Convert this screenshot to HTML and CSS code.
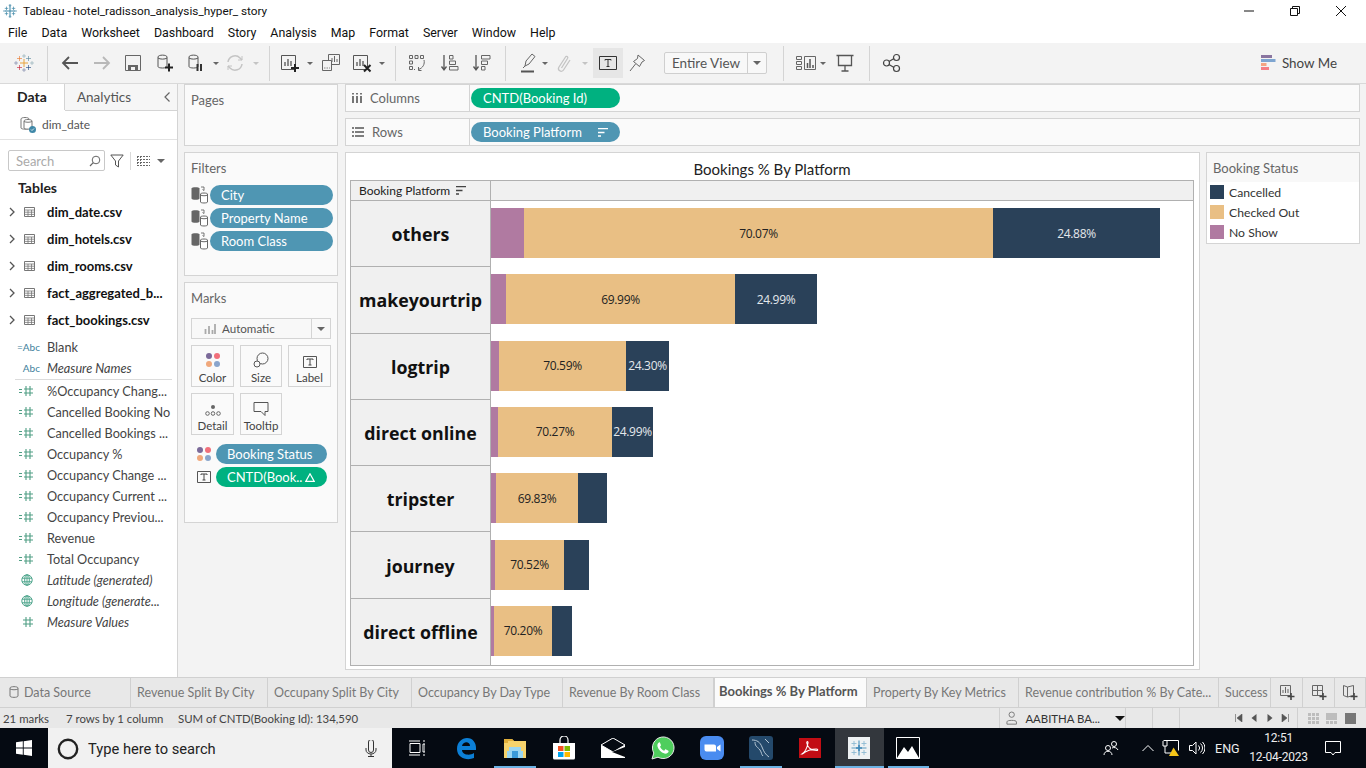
FILE: index.html
```html
<!DOCTYPE html>
<html lang="en">

<head>
    <meta charset="UTF-8">
    <title>Tableau - hotel_radisson_analysis_hyper_ story</title>
    <link rel="stylesheet" href="styles.css">
</head>

<body>
    <svg class="defs" width="0" height="0">
        <symbol id="cross" viewBox="0 0 8 8"><path d="M4 0v8M0 4h8" fill="none" stroke="currentColor"/></symbol>
        <symbol id="tbl" viewBox="0 0 11 10"><path d="M.5.5h10v9H.5z" fill="none" stroke="#777"/><path d="M.5 3h10M.5 5.2h10M.5 7.4h10M4 3v6.500M7.500 3v6.500" stroke="#777" fill="none" stroke-width=".8"/></symbol>
        <symbol id="meas" viewBox="0 0 16 10"><path d="M0 3.500h3M0 6.500h3" stroke="#4f9e84" fill="none"/><path d="M7 0v10M11 0v10M5 3h9M5 7h9" stroke="#4f9e84" fill="none" stroke-width="1.100"/></symbol>
        <symbol id="globe" viewBox="0 0 12 12"><g fill="none" stroke="#4ea58c"><circle cx="6" cy="6" r="5.200"/><ellipse cx="6" cy="6" rx="2.300" ry="5.200"/><path d="M1 4.200h10M1 7.800h10M6 .8v10.400"/></g></symbol>
        <symbol id="dbpair" viewBox="0 0 18 18"><path d="M.5 2.500C.5.800 8.500.800 8.500 2.500v10c0 1.700-8 1.700-8 0z" fill="#666"/><path d="M10 1h3v3.500L11.500 3.500" fill="none" stroke="#555" stroke-width=".8"/><path d="M9.500 8c0-1.300 7-1.300 7 0v8c0 1.300-7 1.300-7 0z" fill="#fff" stroke="#666"/><path d="M9.500 9c1.500 1 5.500 1 7 0" fill="none" stroke="#666"/></symbol>
        <symbol id="sortbars" viewBox="0 0 10 9"><path d="M0 .5h10M0 4.500h6.500M0 8h3" fill="none" stroke="currentColor" stroke-width="1.600"/></symbol>
        <symbol id="chartbox" viewBox="0 0 20 20"><path d="M1.500 2.500h14v14h-14z" fill="none" stroke="#555"/><path d="M5 13V9M8 13V6M11 13v-5" fill="none" stroke="#555" stroke-width="1.300"/></symbol>
    </svg>

    <div class="titlebar">
        <svg class="title-logo" viewBox="0 0 16 16">
            <g color="#3f88a8" fill="none" stroke="currentColor">
                <path d="M8 2v12M2 8h12" stroke-width="1.200"/>
                <path d="M4 3v4M2 5h4M12 3v4M10 5h4M4 9v4M2 11h4M12 9v4M10 11h4M8 0v3M6.500 1.500h3M8 13v3M6.500 14.500h3M0 8h3M13 8h3" stroke-width=".8"/>
            </g>
        </svg>
        <span class="title-text">Tableau - hotel_radisson_analysis_hyper_ story</span>
        <div class="winbtns">
            <svg viewBox="0 0 12 12"><path d="M1 6h10" stroke="#111" fill="none"/></svg>
            <svg viewBox="0 0 12 12"><path d="M1.500 3.500h7v7h-7zM3.500 3.500v-2h7v7h-2" stroke="#111" fill="none"/></svg>
            <svg viewBox="0 0 12 12"><path d="M1 1l10 10M11 1L1 11" stroke="#111" fill="none"/></svg>
        </div>
    </div>

    <nav class="menubar">
        <span>File</span><span>Data</span><span>Worksheet</span><span>Dashboard</span><span>Story</span><span>Analysis</span><span>Map</span><span>Format</span><span>Server</span><span>Window</span><span>Help</span>
    </nav>

    <div class="toolbar">
        <svg class="ico" viewBox="0 0 20 20">
            <use href="#cross" x="8" y="1" width="4" height="4" color="#7099a6"/>
            <use href="#cross" x="3" y="3" width="5" height="5" color="#e8762b"/>
            <use href="#cross" x="12" y="3" width="5" height="5" color="#59879b"/>
            <use href="#cross" x="6" y="6" width="8" height="8" color="#e8a33d"/>
            <use href="#cross" x="0" y="8" width="4" height="4" color="#5b6591"/>
            <use href="#cross" x="16" y="8" width="4" height="4" color="#7099a6"/>
            <use href="#cross" x="3" y="12" width="5" height="5" color="#c72035"/>
            <use href="#cross" x="12" y="12" width="5" height="5" color="#1f457e"/>
            <use href="#cross" x="8" y="15" width="4" height="4" color="#5b6591"/>
        </svg>
        <i class="sep"></i>
        <svg class="ico" viewBox="0 0 20 20"><path d="M18 10H3M9 4l-6 6 6 6" fill="none" stroke="#555" stroke-width="1.800"/></svg>
        <svg class="ico" viewBox="0 0 20 20"><path d="M2 10h15M11 4l6 6-6 6" fill="none" stroke="#b8b8b8" stroke-width="1.800"/></svg>
        <svg class="ico" viewBox="0 0 20 20"><path d="M2.500 2.500h15v15h-15z" fill="none" stroke="#666"/><path d="M5 17v-5h10v5zM8 14h4v3H8z" fill="#666"/><path d="M8 14h4v3H8z" fill="#f3f3f3"/></svg>
        <svg class="ico" viewBox="0 0 20 20"><path d="M3 4c0-2.500 9-2.500 9 0v9.500c0 2-9 2-9 0z" fill="none" stroke="#555"/><path d="M3 5c2 1.500 7 1.500 9 0" fill="none" stroke="#555"/><path d="M14 10.500v8M10 14.500h8" stroke="#222" stroke-width="2" fill="none"/></svg>
        <svg class="ico" viewBox="0 0 20 20"><path d="M3 4c0-2.500 9-2.500 9 0v9.500c0 2-9 2-9 0z" fill="none" stroke="#555"/><path d="M3 5c2 1.500 7 1.500 9 0" fill="none" stroke="#555"/><path d="M11.500 11v7M15 11v7" stroke="#333" stroke-width="2" fill="none"/></svg>
        <i class="caret"></i>
        <svg class="ico" viewBox="0 0 20 20"><path d="M3 9a7 7 0 0 1 12-4l2 2M17 11a7 7 0 0 1-12 4l-2-2" fill="none" stroke="#c4c4c4" stroke-width="1.500"/><path d="M17 3v4h-4M3 17v-4h4" fill="none" stroke="#c4c4c4"/></svg>
        <i class="caret off"></i>
        <i class="sep"></i>
        <svg class="ico" viewBox="0 0 20 20"><use href="#chartbox" width="20" height="20"/><path d="M15 11v8M11 15h8" stroke="#222" stroke-width="2" fill="none"/></svg>
        <i class="caret"></i>
        <svg class="ico" viewBox="0 0 20 20"><path d="M7.500 1.500h11v10h-11z" fill="#f3f3f3" stroke="#666"/><path d="M1.500 7.500h9v10h-9z" fill="#f3f3f3" stroke="#666"/><path d="M11 9V5M13.500 9V3M16 9V6" stroke="#666" fill="none"/><path d="M3 15h6" stroke="#888" stroke-dasharray="1.500 1"/></svg>
        <svg class="ico" viewBox="0 0 20 20"><use href="#chartbox" width="20" height="20"/><path d="M12 12l6.500 6.500M18.500 12L12 18.500" stroke="#222" stroke-width="2" fill="none"/></svg>
        <i class="caret"></i>
        <i class="sep"></i>
        <svg class="ico" viewBox="0 0 20 20"><path d="M2.500 2.500h3v3h-3zM8 2.500h3v3H8zM13.500 2.500h3v3h-3zM2.500 8h3v3h-3zM2.500 13.500h3v3h-3z" fill="none" stroke="#666"/><path d="M17 7c1 4-1 8-5.500 9.500M11.500 14v3.500h3M8 16l-1 1" fill="none" stroke="#666"/></svg>
        <svg class="ico" viewBox="0 0 20 20"><path d="M4 2v14M1.500 13.500L4 17l2.500-3.500" fill="none" stroke="#555" stroke-width="1.300"/><path d="M9.500 2.500h3.500v3.500H9.500zM9.500 8h6v3.500h-6zM9.500 13.500H18V17H9.500z" fill="none" stroke="#666"/></svg>
        <svg class="ico" viewBox="0 0 20 20"><path d="M4 2v14M1.500 13.500L4 17l2.500-3.500" fill="none" stroke="#555" stroke-width="1.300"/><path d="M9.500 2.500H18V6H9.500zM9.500 8h6v3.500h-6zM9.500 13.500h3.500V17H9.500z" fill="none" stroke="#666"/></svg>
        <i class="sep"></i>
        <svg class="ico" viewBox="0 0 20 20"><path d="M7 13l1-5 6-7 3 2.500-6 7.500zM5 15l2-2" fill="none" stroke="#666"/><path d="M3 18.500h13" stroke="#555" stroke-width="2" fill="none"/></svg>
        <i class="caret"></i>
        <svg class="ico" viewBox="0 0 20 20"><path d="M7.500 15L13.500 5.500c1-1.700-1-3-2-1.500L5 14c-2 3 2.500 6 4.500 3L16 7" fill="none" stroke="#c4c4c4" stroke-width="1.300"/></svg>
        <i class="caret off"></i>
        <div class="tool-on"><svg class="ico" viewBox="0 0 20 20"><path d="M1.500 3.500h17v13h-17z" fill="none" stroke="#333"/><path d="M7 7.500V6.500h6v1M10 6.500v7M8.500 13.500h3" fill="none" stroke="#333"/></svg></div>
        <svg class="ico" viewBox="0 0 20 20"><path d="M11 2l6.500 5.500L15 9l-2.500 4.500-6-5 4-3zM8.500 11L3 18" fill="none" stroke="#666"/></svg>
        <div class="fit-box"><span>Entire View</span><b><i class="caret dark"></i></b></div>
        <i class="sep"></i>
        <svg class="ico wide" viewBox="0 0 22 20"><path d="M1.500 3.500h5v3h-5zM1.500 8.500h5v3h-5zM1.500 13.500h5v3h-5z" fill="none" stroke="#666"/><path d="M9.500 3.500h11v13h-11z" fill="none" stroke="#666"/><path d="M12.500 15v-5M15 15V6M18 15v-3" stroke="#555" stroke-width="1.500" fill="none"/></svg>
        <i class="caret"></i>
        <svg class="ico" viewBox="0 0 20 20"><path d="M1.500 2.500h17M3.500 2.500v10h13v-10M10 12.500v5M6.500 18h7" fill="none" stroke="#555" stroke-width="1.300"/></svg>
        <i class="sep"></i>
        <svg class="ico" viewBox="0 0 20 20"><g fill="none" stroke="#444" stroke-width="1.200"><circle cx="4.500" cy="10" r="3"/><circle cx="14.500" cy="4.500" r="3"/><circle cx="14.500" cy="15.500" r="3"/><path d="M7 8.500l5-3M7 11.500l5 3"/></g></svg>
        <div class="showme">
            <svg viewBox="0 0 15 16" width="15" height="16"><path d="M0 0h11v3H0z" fill="#8a75a0"/><path d="M0 4h14.500v3H0z" fill="#7ea5d0"/><path d="M0 8h5.500v3H0z" fill="#f4a582"/><path d="M0 12h8v3H0z" fill="#f57f85"/></svg>
            <span>Show Me</span>
        </div>
    </div>

    <main class="workspace">
        <aside class="datapane">
            <div class="pane-tabs">
                <span class="pane-tab active">Data</span>
                <span class="pane-tab">Analytics</span>
                <svg class="collapse" viewBox="0 0 8 12" width="8" height="12"><path d="M6.500 1.500L2 6l4.500 4.500" fill="none" stroke="#666" stroke-width="1.200"/></svg>
            </div>
            <div class="source">
                <svg viewBox="0 0 18 18" width="18" height="18"><path d="M2 3c0-2 8-2 8 0v9c0 1.500-8 1.500-8 0z" fill="#fff" stroke="#777"/><path d="M5 5c0-2 8-2 8 0v7c0 1.500-8 1.500-8 0z" fill="#fff" stroke="#777"/><path d="M5 5.500c2 1 6 1 8 0" fill="none" stroke="#777"/><circle cx="13.500" cy="13.500" r="3.500" fill="#3f88a8"/><path d="M12 13.500l1 1 2-2" stroke="#fff" fill="none" stroke-width=".8"/></svg>
                <span>dim_date</span>
            </div>
            <div class="search-row">
                <div class="search">
                    <span>Search</span>
                    <svg viewBox="0 0 12 12" width="12" height="12"><circle cx="7" cy="5" r="3.800" fill="none" stroke="#666"/><path d="M4.300 7.700L1 11" stroke="#666" fill="none" stroke-width="1.200"/></svg>
                </div>
                <svg class="filter-ico" viewBox="0 0 14 14" width="14" height="14"><path d="M.8 1h12.400L8.500 7v6l-3-2V7z" fill="none" stroke="#555"/></svg>
                <i class="vline"></i>
                <svg viewBox="0 0 13 10" width="13" height="10"><path d="M0 .5h13M0 3.500h13M0 6.500h13M0 9.500h13M.5 0v10M3.500 0v10" stroke="#666" stroke-dasharray="2 1" fill="none"/></svg>
                <i class="caret dark"></i>
            </div>
            <h3 class="tables-head">Tables</h3>
            <ul class="table-list">
                <li><svg viewBox="0 0 6 10" width="6" height="10"><path d="M1 1l4 4-4 4" fill="none" stroke="#555" stroke-width="1.300"/></svg><svg width="11" height="10"><use href="#tbl"/></svg><span>dim_date.csv</span></li>
                <li><svg viewBox="0 0 6 10" width="6" height="10"><path d="M1 1l4 4-4 4" fill="none" stroke="#555" stroke-width="1.300"/></svg><svg width="11" height="10"><use href="#tbl"/></svg><span>dim_hotels.csv</span></li>
                <li><svg viewBox="0 0 6 10" width="6" height="10"><path d="M1 1l4 4-4 4" fill="none" stroke="#555" stroke-width="1.300"/></svg><svg width="11" height="10"><use href="#tbl"/></svg><span>dim_rooms.csv</span></li>
                <li><svg viewBox="0 0 6 10" width="6" height="10"><path d="M1 1l4 4-4 4" fill="none" stroke="#555" stroke-width="1.300"/></svg><svg width="11" height="10"><use href="#tbl"/></svg><span>fact_aggregated_b...</span></li>
                <li><svg viewBox="0 0 6 10" width="6" height="10"><path d="M1 1l4 4-4 4" fill="none" stroke="#555" stroke-width="1.300"/></svg><svg width="11" height="10"><use href="#tbl"/></svg><span>fact_bookings.csv</span></li>
            </ul>
            <ul class="field-list dims">
                <li><em class="abc">=Abc</em><span>Blank</span></li>
                <li><em class="abc">Abc</em><span class="it">Measure Names</span></li>
            </ul>
            <ul class="field-list">
                <li><svg width="16" height="10"><use href="#meas"/></svg><span>%Occupancy Chang...</span></li>
                <li><svg width="16" height="10"><use href="#meas"/></svg><span>Cancelled Booking No</span></li>
                <li><svg width="16" height="10"><use href="#meas"/></svg><span>Cancelled Bookings ...</span></li>
                <li><svg width="16" height="10"><use href="#meas"/></svg><span>Occupancy %</span></li>
                <li><svg width="16" height="10"><use href="#meas"/></svg><span>Occupancy Change ...</span></li>
                <li><svg width="16" height="10"><use href="#meas"/></svg><span>Occupancy Current ...</span></li>
                <li><svg width="16" height="10"><use href="#meas"/></svg><span>Occupancy Previou...</span></li>
                <li><svg width="16" height="10"><use href="#meas"/></svg><span>Revenue</span></li>
                <li><svg width="16" height="10"><use href="#meas"/></svg><span>Total Occupancy</span></li>
                <li><svg width="16" height="12"><use href="#globe" x="2" width="12" height="12"/></svg><span class="it">Latitude (generated)</span></li>
                <li><svg width="16" height="12"><use href="#globe" x="2" width="12" height="12"/></svg><span class="it">Longitude (generate...</span></li>
                <li><svg width="16" height="10"><path d="M7 0v10M11 0v10M4 3h10M4 7h10" stroke="#4f9e84" fill="none" stroke-width="1.100"/></svg><span class="it">Measure Values</span></li>
            </ul>
        </aside>

        <div class="sidecards">
            <section class="card pages"><h4>Pages</h4></section>
            <section class="card filters">
                <h4>Filters</h4>
                <div class="filter-pill"><svg width="18" height="18"><use href="#dbpair"/></svg><span class="pill blue">City</span></div>
                <div class="filter-pill"><svg width="18" height="18"><use href="#dbpair"/></svg><span class="pill blue">Property Name</span></div>
                <div class="filter-pill"><svg width="18" height="18"><use href="#dbpair"/></svg><span class="pill blue">Room Class</span></div>
            </section>
            <section class="card marks">
                <h4>Marks</h4>
                <div class="mark-type">
                    <svg viewBox="0 0 12 10" width="12" height="10"><path d="M1.500 10V5M5 10V2M8.500 10V6M11 10V0" stroke="#aaa" stroke-width="1.800" fill="none"/></svg>
                    <span>Automatic</span><b><i class="caret dark"></i></b>
                </div>
                <div class="mark-btns">
                    <div class="mark-btn">
                        <svg viewBox="0 0 16 16" width="16" height="16"><circle cx="4" cy="4" r="3" fill="#7b6a99"/><circle cx="12" cy="4" r="3" fill="#f1707b"/><circle cx="4" cy="12" r="3" fill="#f0a87c"/><circle cx="12" cy="12" r="3" fill="#8aa5cc"/></svg>
                        <span>Color</span>
                    </div>
                    <div class="mark-btn">
                        <svg viewBox="0 0 16 16" width="16" height="16"><circle cx="9.500" cy="6.500" r="5.500" fill="none" stroke="#555"/><circle cx="4" cy="12" r="3" fill="#fafafa" stroke="#555"/></svg>
                        <span>Size</span>
                    </div>
                    <div class="mark-btn">
                        <svg viewBox="0 0 14 12" width="14" height="12"><path d="M.5.5h13v11H.5z" fill="none" stroke="#555"/><path d="M4 4V3h6v1M7 3v6M5.500 9h3" fill="none" stroke="#444"/></svg>
                        <span>Label</span>
                    </div>
                    <div class="mark-btn">
                        <svg viewBox="0 0 16 12" width="16" height="12"><circle cx="8" cy="3" r="2" fill="#666"/><g fill="none" stroke="#666"><circle cx="2.500" cy="9.500" r="1.800"/><circle cx="8" cy="9.500" r="1.800"/><circle cx="13.500" cy="9.500" r="1.800"/></g></svg>
                        <span>Detail</span>
                    </div>
                    <div class="mark-btn">
                        <svg viewBox="0 0 16 14" width="16" height="14"><path d="M1 .5h14v9h-3v4l-4-4H1z" fill="none" stroke="#555"/></svg>
                        <span>Tooltip</span>
                    </div>
                </div>
                <div class="mark-pill">
                    <svg viewBox="0 0 16 16" width="16" height="16"><circle cx="4" cy="4" r="3" fill="#7b6a99"/><circle cx="12" cy="4" r="3" fill="#f1707b"/><circle cx="4" cy="12" r="3" fill="#f0a87c"/><circle cx="12" cy="12" r="3" fill="#8aa5cc"/></svg>
                    <span class="pill blue">Booking Status</span>
                </div>
                <div class="mark-pill">
                    <svg viewBox="0 0 14 12" width="14" height="12"><path d="M.5.5h13v11H.5z" fill="none" stroke="#555"/><path d="M4 4V3h6v1M7 3v6M5.500 9h3" fill="none" stroke="#444"/></svg>
                    <span class="pill green spread">CNTD(Book.. <svg viewBox="0 0 10 9" width="10" height="9"><path d="M5 .8L9.200 8.400H.8z" fill="none" stroke="#fff" stroke-width="1.200"/></svg></span>
                </div>
            </section>
        </div>

        <div class="canvas">
            <div class="shelf">
                <div class="shelf-label">
                    <svg viewBox="0 0 10 10" width="10" height="10"><path d="M1 3v7M5 3v7M9 3v7" stroke="#555" stroke-width="1.600" fill="none"/><path d="M1 0v1.500M5 0v1.500M9 0v1.500" stroke="#555" stroke-width="1.600" fill="none"/></svg>
                    <span>Columns</span>
                </div>
                <span class="pill green shelf-pill">CNTD(Booking Id)</span>
            </div>
            <div class="shelf">
                <div class="shelf-label">
                    <svg viewBox="0 0 12 10" width="12" height="10"><path d="M0 1h2M3 1h9M0 5h2M3 5h9M0 9h2M3 9h9" stroke="#555" stroke-width="1.400" fill="none"/></svg>
                    <span>Rows</span>
                </div>
                <span class="pill blue shelf-pill spread">Booking Platform <svg viewBox="0 0 10 9" width="10" height="9" color="#fff"><use href="#sortbars"/></svg></span>
            </div>

            <div class="viz-row">
                <section class="viz">
                    <h2 class="viz-title">Bookings % By Platform</h2>
                    <div class="crosstab">
                        <div class="ct-head">
                            <div class="ct-head-label">Booking Platform <svg viewBox="0 0 10 9" width="10" height="9" color="#444"><use href="#sortbars"/></svg></div>
                            <div class="ct-head-rest"></div>
                        </div>
                        <div class="ct-row">
                            <div class="ct-name">others</div>
                            <div class="ct-plot">
                                <div class="seg noshow" style="width:33px"></div>
                                <div class="seg checked" style="width:469px">70.07%</div>
                                <div class="seg cancelled" style="width:167px">24.88%</div>
                            </div>
                        </div>
                        <div class="ct-row">
                            <div class="ct-name">makeyourtrip</div>
                            <div class="ct-plot">
                                <div class="seg noshow" style="width:15px"></div>
                                <div class="seg checked" style="width:229px">69.99%</div>
                                <div class="seg cancelled" style="width:82px">24.99%</div>
                            </div>
                        </div>
                        <div class="ct-row">
                            <div class="ct-name">logtrip</div>
                            <div class="ct-plot">
                                <div class="seg noshow" style="width:8px"></div>
                                <div class="seg checked" style="width:127px">70.59%</div>
                                <div class="seg cancelled" style="width:43px">24.30%</div>
                            </div>
                        </div>
                        <div class="ct-row">
                            <div class="ct-name">direct online</div>
                            <div class="ct-plot">
                                <div class="seg noshow" style="width:7px"></div>
                                <div class="seg checked" style="width:114px">70.27%</div>
                                <div class="seg cancelled" style="width:41px">24.99%</div>
                            </div>
                        </div>
                        <div class="ct-row">
                            <div class="ct-name">tripster</div>
                            <div class="ct-plot">
                                <div class="seg noshow" style="width:5px"></div>
                                <div class="seg checked" style="width:82px">69.83%</div>
                                <div class="seg cancelled" style="width:29px"></div>
                            </div>
                        </div>
                        <div class="ct-row">
                            <div class="ct-name">journey</div>
                            <div class="ct-plot">
                                <div class="seg noshow" style="width:4px"></div>
                                <div class="seg checked" style="width:69px">70.52%</div>
                                <div class="seg cancelled" style="width:25px"></div>
                            </div>
                        </div>
                        <div class="ct-row">
                            <div class="ct-name">direct offline</div>
                            <div class="ct-plot">
                                <div class="seg noshow" style="width:3px"></div>
                                <div class="seg checked" style="width:58px">70.20%</div>
                                <div class="seg cancelled" style="width:20px"></div>
                            </div>
                        </div>
                    </div>
                </section>
                <section class="legend">
                    <h4>Booking Status</h4>
                    <div class="legend-item"><i class="cancelled"></i>Cancelled</div>
                    <div class="legend-item"><i class="checked"></i>Checked Out</div>
                    <div class="legend-item"><i class="noshow"></i>No Show</div>
                </section>
            </div>
        </div>
    </main>

    <div class="sheet-tabs">
        <div class="sheet-tab"><svg viewBox="0 0 10 12" width="10" height="12"><path d="M1 2c0-1.800 8-1.800 8 0v8c0 1.800-8 1.800-8 0z" fill="none" stroke="#777"/><path d="M1 3c2 1 6 1 8 0" fill="none" stroke="#777"/></svg>Data Source</div>
        <div class="sheet-tab">Revenue Split By City</div>
        <div class="sheet-tab">Occupany Split By City</div>
        <div class="sheet-tab">Occupancy By Day Type</div>
        <div class="sheet-tab">Revenue By Room Class</div>
        <div class="sheet-tab active">Bookings % By Platform</div>
        <div class="sheet-tab">Property By Key Metrics</div>
        <div class="sheet-tab">Revenue contribution % By Cate...</div>
        <div class="sheet-tab clip">Success</div>
        <div class="sheet-tab add"><svg viewBox="0 0 16 16" width="16" height="16"><path d="M1.500 1.500h10v10h-10z" fill="none" stroke="#666"/><path d="M4 9V6M6.500 9V3M9 9V5" stroke="#666" fill="none"/><path d="M12 9v7M8.500 12.500h7" stroke="#444" stroke-width="1.600" fill="none"/></svg></div>
        <div class="sheet-tab add"><svg viewBox="0 0 16 16" width="16" height="16"><path d="M1.500 1.500h10v10h-10zM1.500 6.500h10M6.500 1.500v10" fill="none" stroke="#666"/><path d="M12 9v7M8.500 12.500h7" stroke="#444" stroke-width="1.600" fill="none"/></svg></div>
        <div class="sheet-tab add"><svg viewBox="0 0 16 16" width="16" height="16"><path d="M1.500 1.500l4 1.500 6-1.500v10l-6 1.500-4-1.500zM5.500 3v10" fill="none" stroke="#666"/><path d="M12 9v7M8.500 12.500h7" stroke="#444" stroke-width="1.600" fill="none"/></svg></div>
    </div>

    <div class="statusbar">
        <span class="st-marks">21 marks</span>
        <span class="st-rows">7 rows by 1 column</span>
        <span class="st-sum">SUM of CNTD(Booking Id): 134,590</span>
        <div class="st-user">
            <svg viewBox="0 0 12 14" width="12" height="14"><circle cx="6" cy="3.500" r="2.800" fill="none" stroke="#777"/><path d="M1 13.500V11c0-2 10-2 10 0v2.500z" fill="none" stroke="#777"/></svg>
            <span>AABITHA BA...</span>
            <i class="caret black"></i>
        </div>
        <div class="st-cell"></div>
        <div class="st-cell"></div>
        <div class="st-nav">
            <svg viewBox="0 0 8 8" width="8" height="8"><path d="M.5 0v8M7 0v8L2 4z" fill="#555" stroke="#555" stroke-width=".6"/></svg>
            <svg viewBox="0 0 8 8" width="8" height="8"><path d="M6.500 0v8L1.500 4z" fill="#555"/></svg>
            <svg viewBox="0 0 8 8" width="8" height="8"><path d="M1.500 0v8l5-4z" fill="#555"/></svg>
            <svg viewBox="0 0 8 8" width="8" height="8"><path d="M7.500 0v8M1 0v8l5-4z" fill="#555" stroke="#555" stroke-width=".6"/></svg>
        </div>
        <div class="st-views">
            <svg viewBox="0 0 11 11" width="11" height="11"><path d="M0 0h3v3H0zM4 0h3v3H4zM8 0h3v3H8zM0 4h3v3H0zM4 4h3v3H4zM8 4h3v3H8zM0 8h3v3H0zM4 8h3v3H4zM8 8h3v3H8z" fill="#bdbdbd"/></svg>
            <svg viewBox="0 0 11 11" width="11" height="11"><path d="M0 0h11v7H0zM0 8h3v3H0zM4 8h3v3H4zM8 8h3v3H8z" fill="#bdbdbd"/></svg>
            <svg viewBox="0 0 11 11" width="11" height="11"><path d="M0 0h11v11H0z" fill="#777"/></svg>
        </div>
    </div>

    <footer class="taskbar">
        <div class="start"><svg viewBox="0 0 16 16" width="16" height="16"><path d="M0 2.300L6.800 1.300V7.600H0zM7.700 1.200L16 0V7.600H7.700zM0 8.400H6.800V14.700L0 13.700zM7.700 8.400H16V16L7.700 14.800z" fill="#fff"/></svg></div>
        <div class="task-search">
            <svg viewBox="0 0 22 22" width="22" height="22"><circle cx="11" cy="11" r="9.200" fill="none" stroke="#222" stroke-width="2.400"/></svg>
            <span>Type here to search</span>
            <svg class="mic" viewBox="0 0 12 17" width="12" height="17"><path d="M3.500 1.500a2.500 2.500 0 0 1 5 0v8a2.500 2.500 0 0 1-5 0z" transform="translate(0 .5)" fill="none" stroke="#333"/><path d="M1 8v2a5 4 0 0 0 10 0V8M6 14v2.500M3 16.500h6" fill="none" stroke="#333"/></svg>
        </div>
        <div class="task-icons">
            <div class="task-icon"><svg viewBox="0 0 16 16" width="16" height="16"><path d="M1 3.500h10v9H1zM0 1h11M0 15h11M14 1h2M14 4h2v8h-2zM14 15h2" fill="none" stroke="#fff" stroke-width="1"/></svg></div>
            <div class="task-icon"><svg viewBox="0 0 24 24" width="24" height="24"><path d="M3 13C3 6 8 2 13 2c6 0 9 5 9 10v2H8c0 5 8 6 12 3v5c-7 3-17 0-17-9zM8 10h8c0-5-7-5-8 0z" fill="#0c7fd6"/></svg></div>
            <div class="task-icon on"><svg viewBox="0 0 24 22" width="24" height="22"><path d="M1 2h8l2 2h12v17H1z" fill="#f6d36c"/><path d="M1 2h8l2 2H5v2H1z" fill="#e0ae3a"/><path d="M6 10h12v4h2v7H4v-7h2z" fill="#9ad6f2"/><path d="M9 14h6v7H9z" fill="#3a9ad9"/></svg></div>
            <div class="task-icon"><svg viewBox="0 0 24 24" width="24" height="24"><path d="M1 7h22v15a1.500 1.500 0 0 1-1.500 1.500h-19A1.500 1.500 0 0 1 1 22z" fill="#fff"/><path d="M8 7V4a4 4 0 0 1 8 0v3" fill="none" stroke="#fff" stroke-width="1.200"/><path d="M6 10h5.500v5H6z" fill="#f25022"/><path d="M12.500 10H18v5h-5.500z" fill="#7fba00"/><path d="M6 16h5.500v5H6z" fill="#00a4ef"/><path d="M12.500 16H18v5h-5.500z" fill="#ffb900"/></svg></div>
            <div class="task-icon"><svg viewBox="0 0 24 20" width="24" height="20"><path d="M0 7L12 0l12 7-12 7z" fill="none" stroke="#fff"/><path d="M0 7l12 7 12-7v13H0z" fill="#fff"/><path d="M24 9L11 14l13 5z" fill="#05090f"/></svg></div>
            <div class="task-icon"><svg viewBox="0 0 24 24" width="24" height="24"><path d="M1 23l1.800-6A10.800 10.800 0 1 1 7 21.200z" fill="#4fce5d" stroke="#e8e8e8"/><path d="M8 6.500c-1 .5-2 2-1.500 4 .8 3 3.500 6 7 7 2 .5 3.500-.5 4-1.800.3-.8 0-1-.5-1.300l-2-1c-.5-.2-.8 0-1 .3l-.8 1c-1.500-.5-3.500-2.300-4.200-4l.8-1c.2-.3.2-.6 0-1l-.8-2c-.2-.5-.5-.5-1-.2z" fill="#fff"/></svg></div>
            <div class="task-icon"><svg viewBox="0 0 24 24" width="24" height="24"><rect width="24" height="24" rx="6" fill="#4a8cf0"/><path d="M4.500 8.500h9.500a2 2 0 0 1 2 2v5H6.500a2 2 0 0 1-2-2zM17 11l3.500-2.500v7L17 13z" fill="#fff"/></svg></div>
            <div class="task-icon on"><svg viewBox="0 0 24 24" width="24" height="24"><rect width="24" height="24" rx="3" fill="#24496b"/><path d="M3 4c5 0 8 2 10 7s3 7 7 10M6 6c0 5 3 5 5 8s1 4 3 6M16 3l4 4" fill="none" stroke="#b5c6d4" stroke-width="1"/></svg></div>
            <div class="task-icon"><svg viewBox="0 0 22 20" width="22" height="20"><path d="M0 0h22v20H0z" fill="#c20d14"/><path d="M3 16c3-2 5-6 6-11 .3-2-1.500-2-1.200 0 .7 4 4 7.500 10 7.500 1.500 0 1-1.500-.5-1.500-5 0-10 2-14 5z" fill="none" stroke="#fff" stroke-width="1.100"/></svg></div>
            <div class="task-icon on current"><svg viewBox="0 0 22 22" width="22" height="22"><path d="M0 0h22v22H0z" fill="#eef1f3"/><path d="M11 3.500v15M3.500 11h15" fill="none" stroke="#5b9bc0" stroke-width="1.200"/><path d="M11 8v6M8 11h6" fill="none" stroke="#3f88b8" stroke-width="1.600"/><path d="M6 4v5M3.500 6.500h5M16 4v5M13.500 6.500h5M6 13v5M3.500 15.500h5M16 13v5M13.500 15.500h5" fill="none" stroke="#8dbad2" stroke-width=".9"/></svg></div>
            <div class="task-icon on"><svg viewBox="0 0 24 22" width="24" height="22"><path d="M.5.5h23v21H.5z" fill="#05090f" stroke="#fff"/><path d="M1 21l7-11 4 5 4-6 7 12z" fill="#fff"/></svg></div>
        </div>
        <div class="tray">
            <svg class="t-people" viewBox="0 0 16 16" width="16" height="16"><g fill="none" stroke="#fff"><circle cx="11" cy="4" r="2.500"/><circle cx="5" cy="8" r="2.500"/><path d="M1 15c0-5 8-5 8 0M9 8c2-1 5-.5 6 2"/></g></svg>
            <svg class="t-up" viewBox="0 0 12 8" width="12" height="8"><path d="M.5 7L6 1.500 11.500 7" fill="none" stroke="#fff"/></svg>
            <svg class="t-net" viewBox="0 0 18 16" width="18" height="16"><path d="M1.500.5h15v10M1 1v5h4V1M3 6v7h7" fill="none" stroke="#fff"/><path d="M11.500 7.500L17 16H7z" fill="#f5c518"/></svg>
            <svg class="t-vol" viewBox="0 0 16 14" width="16" height="14"><path d="M.5 4.500h3L7 1v12L3.500 9.500h-3zM9.500 4.500a3.500 3.500 0 0 1 0 5M11.500 2.500a6 6 0 0 1 0 9M13.500 1a8.500 8.500 0 0 1 0 12" fill="none" stroke="#fff"/></svg>
            <span class="t-lang">ENG</span>
            <div class="t-clock"><span>12:51</span><span>12-04-2023</span></div>
            <svg class="t-note" viewBox="0 0 16 15" width="16" height="15"><path d="M.5.5h15v11H10l-2 2.500-2-2.500H.5z" fill="none" stroke="#fff"/></svg>
        </div>
    </footer>
</body>

</html>
```

FILE: styles.css
```css
/* General styles */
body {
    margin: 0;
    width: 1366px;
    height: 768px;
    overflow: hidden;
    display: flex;
    flex-direction: column;
    background-color: #f3f3f3;
    font-family: Lato, "Liberation Sans", sans-serif;
    font-size: 12px;
    color: #555;
}

.defs {
    display: block;
    height: 0;
}

h2, h3, h4, ul {
    margin: 0;
    padding: 0;
    font-weight: normal;
}

ul {
    list-style: none;
}

/* Window title and menu */
.titlebar {
    height: 22px;
    flex: none;
    display: flex;
    align-items: center;
    background-color: #fff;
    color: #111;
    font-family: Roboto, sans-serif;
    font-size: 11.8px;
    padding-left: 3px;
}

.title-logo {
    width: 14px;
    height: 14px;
    margin-right: 6px;
}

.winbtns {
    margin-left: auto;
    display: flex;
    gap: 34px;
    padding-right: 19px;
}

.winbtns svg {
    width: 12px;
    height: 12px;
}

.menubar {
    height: 21px;
    flex: none;
    display: flex;
    align-items: center;
    gap: 14px;
    padding-left: 8px;
    background-color: #fff;
    color: #111;
    font-family: Roboto, sans-serif;
    font-size: 12.4px;
}

/* Toolbar */
.toolbar {
    height: 41px;
    flex: none;
    box-sizing: border-box;
    padding-left: 7px;
    display: grid;
    grid-template-columns: 33px 14px 32px 32px 30px 34px 28px 12px 26px 16px 10px 32px 8px 34px 28px 12px 14px 30px 36px 28px 18px 28px 6px 32px 10px 36px 22px 126px 18px 28px 6px 38px 10px 36px 1fr;
    justify-items: center;
    align-items: center;
    background-color: #f3f3f3;
    border-bottom: 1px solid #d9d9d9;
}

.ico {
    width: 20px;
    height: 20px;
}

.ico.wide {
    width: 22px;
}

.sep {
    display: block;
    width: 1px;
    height: 35px;
    background-color: #d4d4d4;
}

.caret {
    display: block;
    width: 0;
    height: 0;
    border-left: 3px solid transparent;
    border-right: 3px solid transparent;
    border-top: 3px solid #666;
}

.caret.off {
    border-top-color: #c4c4c4;
}

.caret.dark {
    border-left-width: 4px;
    border-right-width: 4px;
    border-top: 4px solid #666;
}

.caret.black {
    border-left-width: 5px;
    border-right-width: 5px;
    border-top: 5px solid #111;
}

.tool-on {
    width: 30px;
    height: 30px;
    display: flex;
    align-items: center;
    justify-content: center;
    background-color: #e6e6e6;
}

.fit-box {
    justify-self: start;
    margin-left: 16px;
    width: 103px;
    height: 22px;
    box-sizing: border-box;
    display: flex;
    align-items: center;
    border: 1px solid #cfcfcf;
    border-radius: 2px;
    background-color: #f8f8f8;
    font-size: 13.5px;
}

.fit-box span {
    flex: 1;
    padding-left: 7px;
}

.fit-box b {
    width: 18px;
    height: 100%;
    display: flex;
    align-items: center;
    justify-content: center;
    border-left: 1px solid #cfcfcf;
}

.showme {
    justify-self: end;
    display: flex;
    align-items: center;
    gap: 6px;
    padding-right: 29px;
    font-size: 13.4px;
    color: #444;
}

/* Main area */
.workspace {
    height: 593px;
    flex: none;
    display: flex;
}

.datapane {
    width: 177px;
    flex: none;
    background-color: #fff;
    border-right: 1px solid #d4d4d4;
}

.pane-tabs {
    height: 26px;
    display: flex;
    align-items: center;
    position: relative;
    font-size: 13.5px;
}

.pane-tab {
    height: 26px;
    line-height: 26px;
    text-align: center;
    flex: 1;
    background-color: #f6f6f6;
    border-bottom: 1px solid #d4d4d4;
    padding-right: 34px;
}

.pane-tab.active {
    flex: none;
    width: 64px;
    padding: 0;
    font-size: 14px;
    font-weight: bold;
    color: #222;
    background-color: #fff;
    border-right: 1px solid #d4d4d4;
    border-bottom: none;
}

.collapse {
    position: absolute;
    right: 6px;
    top: 7px;
}

.source {
    height: 30px;
    box-sizing: border-box;
    display: flex;
    align-items: center;
    gap: 5px;
    padding-left: 19px;
    border-bottom: 1px solid #e2e2e2;
}

.search-row {
    height: 21px;
    margin-top: 10px;
    display: flex;
    align-items: center;
    padding-left: 8px;
}

.search {
    width: 97px;
    height: 21px;
    box-sizing: border-box;
    display: flex;
    align-items: center;
    justify-content: space-between;
    padding: 0 3px 0 7px;
    border: 1px solid #c8c8c8;
    border-radius: 2px;
    color: #aaa;
    font-size: 13px;
}

.filter-ico {
    margin-left: 5px;
}

.vline {
    width: 1px;
    height: 18px;
    margin: 0 6px;
    background-color: #d9d9d9;
}

.search-row .caret {
    margin-left: 7px;
}

.tables-head {
    margin: 8px 0 0 18px;
    height: 17px;
    line-height: 17px;
    font-size: 14px;
    font-weight: bold;
    color: #222;
}

.table-list {
    margin-top: 2px;
}

.table-list li {
    height: 27px;
    display: flex;
    align-items: center;
    padding-left: 9px;
    font-size: 13px;
    font-weight: bold;
    color: #111;
}

.table-list svg + svg {
    margin: 0 12px 0 9px;
}

.field-list li {
    height: 21px;
    display: flex;
    align-items: center;
    padding-left: 19px;
    font-size: 12.7px;
    color: #444;
}

.field-list li svg {
    width: 16px;
    margin-right: 12px;
}

.field-list {
    margin-top: 0;
}

.dims {
    margin-top: 3px;
    margin-left: 0;
    height: 44px;
    position: relative;
}

.dims::after {
    content: "";
    position: absolute;
    left: 15px;
    right: 5px;
    bottom: 0;
    height: 1px;
    background-color: #dcdcdc;
}

.abc {
    width: 28px;
    font-style: normal;
    font-size: 10px;
    color: #3e7f9c;
    margin-left: -2px;
    margin-right: 2px;
    text-align: right;
    padding-right: 5px;
    box-sizing: border-box;
}

.it {
    font-style: italic;
}

.sidecards {
    width: 154px;
    flex: none;
    margin: 0 7px 0 6px;
    display: flex;
    flex-direction: column;
    gap: 6px;
}

.card {
    box-sizing: border-box;
    background-color: #fafafa;
    border: 1px solid #d4d4d4;
    padding: 7px 6px;
}

.card h4 {
    font-size: 13px;
    line-height: 16px;
    color: #666;
}

.pages {
    height: 62px;
}

.filters {
    height: 124px;
}

.marks {
    height: 241px;
}

.filters h4 {
    margin-bottom: 9px;
}

.filter-pill {
    display: flex;
    align-items: center;
    margin-bottom: 3px;
    gap: 1px;
}

.filter-pill svg {
    flex: none;
}

.filter-pill .pill {
    width: 123px;
    flex: none;
}

.pill {
    display: block;
    height: 20px;
    line-height: 20px;
    box-sizing: border-box;
    padding-left: 11px;
    border-radius: 10px;
    color: #fff;
    font-size: 13px;
    white-space: nowrap;
}

.pill.blue {
    background-color: #4f96b3;
}

.pill.green {
    background-color: #00b180;
}

.pill.spread {
    display: flex;
    align-items: center;
    justify-content: space-between;
    padding-right: 12px;
}

.mark-type {
    margin-top: 12px;
    height: 21px;
    box-sizing: border-box;
    display: flex;
    align-items: center;
    padding-left: 12px;
    gap: 6px;
    border: 1px solid #d4d4d4;
    background-color: #f8f8f8;
    font-size: 11.6px;
}

.mark-type span {
    flex: 1;
}

.mark-type b {
    width: 18px;
    height: 100%;
    display: flex;
    align-items: center;
    justify-content: center;
    border-left: 1px solid #d4d4d4;
}

.mark-btns {
    margin-top: 6px;
    display: grid;
    grid-template-columns: 43px 42px 43px;
    column-gap: 6px;
    row-gap: 6px;
}

.mark-btn {
    height: 42px;
    box-sizing: border-box;
    display: flex;
    flex-direction: column;
    align-items: center;
    justify-content: flex-end;
    gap: 3px;
    padding-bottom: 2px;
    border: 1px solid #d4d4d4;
    font-size: 11.500px;
    color: #444;
}

.mark-pill {
    display: flex;
    align-items: center;
    margin-top: 3px;
}

.mark-btns + .mark-pill {
    margin-top: 9px;
}

.mark-pill > svg {
    width: 16px;
    margin: 0 3px 0 5px;
}

.mark-pill .pill {
    width: 111px;
    margin-left: 1px;
}

/* Columns, rows and the view */
.canvas {
    width: 1015px;
    flex: none;
    display: flex;
    flex-direction: column;
    gap: 6px;
}

.shelf {
    height: 28px;
    box-sizing: border-box;
    display: flex;
    align-items: center;
    background-color: #fafafa;
    border: 1px solid #d4d4d4;
}

.shelf-label {
    width: 124px;
    height: 100%;
    flex: none;
    box-sizing: border-box;
    display: flex;
    align-items: center;
    gap: 8px;
    padding-left: 6px;
    border-right: 1px solid #d4d4d4;
    font-size: 13px;
    color: #666;
}

.shelf-pill {
    width: 149px;
    margin-left: 1px;
    padding-left: 12px;
}

.viz-row {
    display: flex;
    gap: 6px;
    align-items: flex-start;
}

.viz {
    width: 855px;
    height: 518px;
    box-sizing: border-box;
    display: flex;
    flex-direction: column;
    background-color: #fff;
    border: 1px solid #d4d4d4;
    padding: 0 5px 3px 4px;
}

.viz-title {
    height: 27px;
    line-height: 33px;
    text-align: center;
    font-size: 15px;
    color: #222;
}

.crosstab {
    flex: 1;
    display: flex;
    flex-direction: column;
    border: 1px solid #b0b0b0;
}

.ct-head {
    height: 20px;
    flex: none;
    display: flex;
    background-color: #f0f0f0;
    border-bottom: 1px solid #b0b0b0;
    box-sizing: border-box;
}

.ct-head-label {
    width: 140px;
    flex: none;
    box-sizing: border-box;
    display: flex;
    align-items: center;
    gap: 6px;
    padding-left: 8px;
    border-right: 1px solid #b0b0b0;
    font-size: 12px;
    color: #222;
}

.ct-row {
    flex: 1;
    display: flex;
}

.ct-name {
    width: 140px;
    flex: none;
    box-sizing: border-box;
    display: flex;
    align-items: center;
    justify-content: center;
    padding-top: 1px;
    background-color: #f0f0f0;
    border-right: 1px solid #b0b0b0;
    border-bottom: 1px solid #b0b0b0;
    font-family: "Open Sans", sans-serif;
    font-size: 17.8px;
    font-weight: bold;
    color: #111;
}

.ct-row:last-child .ct-name {
    border-bottom: none;
}

.ct-plot {
    flex: 1;
    display: flex;
    align-items: center;
    padding-bottom: 2px;
}

.seg {
    height: 50px;
    flex: none;
    display: flex;
    align-items: center;
    justify-content: center;
    font-family: "Open Sans", sans-serif;
    font-size: 12px;
    letter-spacing: -.3px;
}

.noshow {
    background-color: #b07aa1;
}

.checked {
    background-color: #e9bf84;
    color: #222;
}

.cancelled {
    background-color: #2a4159;
    color: #e4e8ec;
}

.legend {
    width: 154px;
    height: 92px;
    box-sizing: border-box;
    background-color: #fff;
    border: 1px solid #d4d4d4;
}

.legend h4 {
    height: 29px;
    line-height: 30px;
    padding-left: 6px;
    background-color: #f8f8f8;
    font-size: 13px;
    color: #666;
}

.legend-item {
    height: 20px;
    display: flex;
    align-items: center;
    gap: 5px;
    padding-left: 3px;
    font-size: 12.2px;
    color: #333;
}

.legend-item i {
    width: 14px;
    height: 14px;
}

/* Sheet tabs */
.sheet-tabs {
    height: 31px;
    flex: none;
    box-sizing: border-box;
    display: grid;
    grid-template-columns: 131px 137px 144px 151px 151px 153px 152px 200px 52px 32px 32px 31px;
    background-color: #e8e8e8;
    border-top: 1px solid #d0d0d0;
    border-bottom: 1px solid #d0d0d0;
}

.sheet-tab {
    box-sizing: border-box;
    display: flex;
    align-items: center;
    gap: 5px;
    padding: 0 0 1px 6px;
    border-right: 1px solid #d0d0d0;
    font-size: 12.5px;
    color: #777;
    white-space: nowrap;
    overflow: hidden;
}

.sheet-tab:first-child {
    padding-left: 9px;
}

.sheet-tab.active {
    background-color: #fbfbfb;
    font-size: 13px;
    font-weight: bold;
    color: #555;
    padding: 0 0 3px 4px;
    border-left: 1px solid #d0d0d0;
}

.sheet-tab.add {
    justify-content: center;
    padding-left: 0;
}

/* Status bar */
.statusbar {
    height: 20px;
    flex: none;
    display: flex;
    align-items: center;
    background-color: #e8e8e8;
    font-size: 11.4px;
    color: #444;
    white-space: nowrap;
}

.st-marks {
    margin-left: 3px;
    width: 63px;
}

.st-rows {
    width: 112px;
}

.st-sum {
    width: 821px;
}

.st-user {
    width: 127px;
    height: 100%;
    box-sizing: border-box;
    display: flex;
    align-items: center;
    gap: 8px;
    padding-left: 6px;
    border-left: 1px solid #d0d0d0;
    border-right: 1px solid #d0d0d0;
    color: #333;
}

.st-user span {
    width: 86px;
}

.st-cell {
    width: 27px;
    height: 100%;
    box-sizing: border-box;
    border-right: 1px solid #d0d0d0;
}

.st-nav {
    width: 71px;
    height: 100%;
    box-sizing: border-box;
    display: flex;
    align-items: center;
    justify-content: space-around;
    padding: 0 4px;
    margin-left: 47px;
    border-right: 1px solid #d0d0d0;
}

.st-views {
    flex: 1;
    display: flex;
    align-items: center;
    justify-content: space-around;
    padding: 0 6px;
}

/* Windows taskbar */
.taskbar {
    height: 40px;
    flex: none;
    display: flex;
    background-color: #050a12;
    color: #fff;
}

.start {
    width: 48px;
    display: flex;
    align-items: center;
    justify-content: center;
}

.task-search {
    width: 344px;
    box-sizing: border-box;
    display: flex;
    align-items: center;
    gap: 9px;
    padding: 1px 13px 0 9px;
    background-color: #f1f1f1;
    color: #222;
    font-family: Roboto, sans-serif;
    font-size: 14.700px;
}

.mic {
    margin-left: auto;
    margin-right: 2px;
}

.task-icons {
    display: flex;
}

.task-icon {
    width: 49.200px;
    box-sizing: border-box;
    display: flex;
    align-items: center;
    justify-content: center;
    position: relative;
}

.task-icon.on::after {
    content: "";
    position: absolute;
    left: 4px;
    right: 4px;
    bottom: 0;
    height: 2px;
    background-color: #6cb2e4;
}

.task-icon.current {
    background-color: #33373d;
}

.task-icon.current::after {
    left: 0;
    right: 0;
}

.tray {
    flex: 1;
    display: flex;
    align-items: center;
    font-family: Roboto, sans-serif;
    font-size: 12.500px;
    color: #eee;
}

.t-people {
    margin-left: 170px;
}

.t-up {
    margin-left: 23px;
}

.t-net {
    margin-left: 8px;
}

.t-vol {
    margin-left: 9px;
}

.t-lang {
    margin-left: 10px;
}

.t-clock {
    width: 74px;
    margin: -1px 0 0 2px;
    display: flex;
    flex-direction: column;
    align-items: center;
    line-height: 19px;
    font-size: 12px;
    letter-spacing: -.2px;
}

.t-note {
    margin-left: 9px;
}
```
